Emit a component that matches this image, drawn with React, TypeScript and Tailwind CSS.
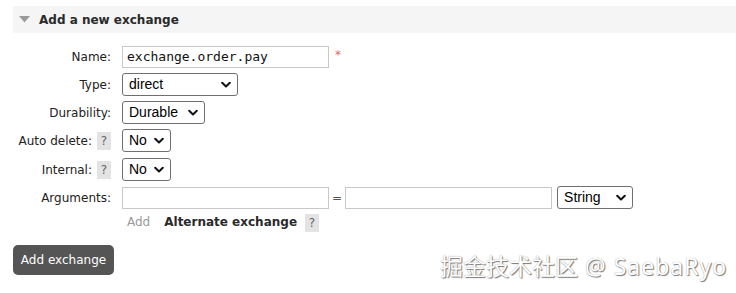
import type { ReactNode } from 'react';

const sans = { fontFamily: '"DejaVu Sans", Verdana, sans-serif' };

function Chevron() {
  return (
    <svg width="10" height="7" viewBox="0 0 10 7" className="pointer-events-none absolute right-[7px] top-1/2 -translate-y-1/2">
      <polyline points="1.2,1.2 5,5 8.8,1.2" fill="none" stroke="#111" strokeWidth="2" strokeLinecap="round" strokeLinejoin="round" />
    </svg>
  );
}

function Select({ value, width }: { value: string; width: string }) {
  return (
    <div className={`relative h-[23px] ${width}`}>
      <div
        className="flex h-full w-full items-center rounded-[3px] border border-[#6f6f6f] bg-white pl-[6px] text-[14px] text-black"
        style={{ fontFamily: '"Liberation Sans", Arial, sans-serif' }}
      >
        {value}
      </div>
      <Chevron />
    </div>
  );
}

function Help() {
  return (
    <span className="inline-flex h-[18px] w-[14px] items-center justify-center bg-[#e3e3e3] text-[12px] text-[#666]">
      ?
    </span>
  );
}

function Row({ label, help, children }: { label: string; help?: boolean; children: ReactNode }) {
  return (
    <div className="flex h-[23px] items-center">
      <div className="flex w-[98px] items-center justify-end gap-[5px] text-[12px] text-[#222]">
        <span>{label}</span>
        {help && <Help />}
      </div>
      <div className="ml-[11px] flex items-center">{children}</div>
    </div>
  );
}

function TextInput({ value = '', width }: { value?: string; width: string }) {
  return (
    <div
      className={`flex h-[22px] ${width} items-center border border-[#c8c8c8] bg-white pl-[4px] text-[13px] text-[#111]`}
      style={{ fontFamily: '"DejaVu Sans Mono", monospace' }}
    >
      {value}
    </div>
  );
}

export default function App() {
  return (
    <div className="relative h-[293px] w-[736px] overflow-hidden bg-white" style={sans}>
      <div className="pl-[13px] pt-[6px]">
        {/* Section header */}
        <div className="flex h-[27px] items-center bg-[#f5f5f5] pl-[6px]">
          <svg width="11" height="7" viewBox="0 0 11 7">
            <polygon points="0,0 11,0 5.5,6.5" fill="#9a9a9a" />
          </svg>
          <span className="ml-[9px] text-[12px] font-bold text-[#2a2a2a]">Add a new exchange</span>
        </div>

        <div className="mt-[12px] flex flex-col gap-[5px]">
          <Row label="Name:">
            <TextInput value="exchange.order.pay" width="w-[207px]" />
            <span className="ml-[6px] -mt-[4px] text-[12px] text-[#e06a6a]">*</span>
          </Row>
          <Row label="Type:">
            <Select value="direct" width="w-[116px]" />
          </Row>
          <Row label="Durability:">
            <Select value="Durable" width="w-[83px]" />
          </Row>
          <Row label="Auto delete:" help>
            <Select value="No" width="w-[49px]" />
          </Row>
          <div className="mt-[1px]">
            <Row label="Internal:" help>
              <Select value="No" width="w-[49px]" />
            </Row>
          </div>
          <Row label="Arguments:">
            <TextInput width="w-[207px]" />
            <span className="mx-[3px] text-[12px] text-[#555]">=</span>
            <TextInput width="w-[207px]" />
            <div className="ml-[5px]">
              <Select value="String" width="w-[76px]" />
            </div>
          </Row>
        </div>

        <div className="ml-[114px] mt-[4px] flex h-[18px] items-center">
          <span className="text-[12px] text-[#999]">Add</span>
          <span className="ml-[14px] text-[12px] font-bold text-[#2a2a2a]">Alternate exchange</span>
          <span className="ml-[8px]">
            <Help />
          </span>
        </div>

        <button
          type="button"
          className="mt-[14px] flex h-[30px] w-[101px] items-center justify-center rounded-[5px] bg-[#555555] text-[12px] text-white"
        >
          Add exchange
        </button>
      </div>

      {/* watermark */}
      <div
        className="absolute left-[440px] top-[249px] text-[23px] text-white"
        style={{
          fontFamily: '"Noto Sans", "Noto Sans CJK SC", sans-serif',
          textShadow: '1px 1px 1px #777, 0 0 1px #999',
        }}
      >
        掘金技术社区<span className="tracking-[1px]"> @ SaebaRyo</span>
      </div>
    </div>
  );
}
